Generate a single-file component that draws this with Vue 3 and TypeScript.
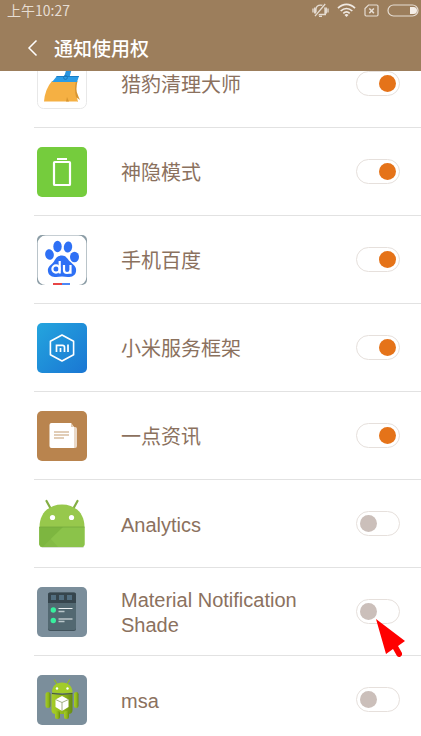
<script setup lang="ts">
import { ref } from 'vue'

interface AppEntry {
  id: string
  name: string
  enabled: boolean
}

const apps = ref<AppEntry[]>([
  { id: 'cleaner', name: '猎豹清理大师', enabled: true },
  { id: 'battery', name: '神隐模式', enabled: true },
  { id: 'baidu', name: '手机百度', enabled: true },
  { id: 'mi', name: '小米服务框架', enabled: true },
  { id: 'news', name: '一点资讯', enabled: true },
  { id: 'analytics', name: 'Analytics', enabled: false },
  { id: 'shade', name: 'Material Notification Shade', enabled: false },
  { id: 'msa', name: 'msa', enabled: false },
])
</script>

<template>
  <div class="screen">
    <header class="header">
      <div class="status">
        <span>上午10:27</span>
        <div class="status-icons">
          <svg width="17" height="15" viewBox="0 0 17 15" fill="none" stroke="#e6ddd3" stroke-width="1.3">
            <path d="M4 11.2V6.2C4 3.6 5.8 2.1 8.5 2.1S13 3.6 13 6.2v5M3 11.5h11M7 13.3h3M1 5.500v4M16 5.500v4M2.700 4.500v6M14.300 4.500v6" />
            <path d="M13.500 1L3.300 13.200" stroke="#9c7e5c" stroke-width="3" />
            <path d="M13.200 1L3 13.200" />
          </svg>
          <svg width="19" height="14" viewBox="0 0 19 14" fill="none" stroke="#f0e9e2" stroke-width="1.7">
            <path d="M1 5.200C6 .2 13 .2 18 5.200M3.700 8c3.500-3.300 8.100-3.300 11.600 0M6.300 10.400c2-1.800 4.400-1.800 6.400 0" />
            <path d="M7.500 12a2.800 2.800 0 0 1 4 0l-2 2z" fill="#f0e9e2" stroke="none" />
          </svg>
          <svg width="15" height="13" viewBox="0 0 15 13" fill="none" stroke="#e6ddd3" stroke-width="1.2">
            <path d="M4.500 1h8.300a1.200 1.200 0 0 1 1.200 1.200v8.600a1.200 1.200 0 0 1-1.200 1.200H2.200A1.200 1.200 0 0 1 1 10.800V4.500z" />
            <path d="M5.300 4.500l4.600 4.600M9.900 4.500L5.300 9.100" stroke-width="1.500" />
          </svg>
          <svg width="32" height="13" viewBox="0 0 32 13">
            <rect x="1" y="1" width="30" height="11" rx="5.500" fill="none" stroke="#e6ddd3" stroke-width="1.200" />
            <path d="M23 3h3.500a3.500 3.500 0 0 1 0 7H23z" fill="#f4eee8" />
          </svg>
        </div>
      </div>
      <div class="title-bar">
        <button class="back" type="button" aria-label="返回">
          <svg width="12" height="18" viewBox="0 0 12 18" fill="none" stroke="#fff" stroke-width="1.500">
            <path d="M9.500 1.500L2 9l7.500 7.500" />
          </svg>
        </button>
        <h1>通知使用权</h1>
      </div>
    </header>

    <main class="viewport">
      <ul class="list">
        <li v-for="app in apps" :key="app.id">
          <label class="row">
            <svg class="icon" viewBox="0 0 50 50" aria-hidden="true">
              <g v-if="app.id === 'cleaner'">
                <rect x=".5" y=".5" width="49" height="49" rx="6" fill="#fff" stroke="#e8e8e8" />
                <path d="M15 22Q8 30 7 42.500h33l1 .5-2-9 0-12z" fill="#f5b043" />
                <path d="M39 22h1.500q-2 9 0 13 1 3 2.500 6l-4-3q-2-8 0-16M30 38l2 4.500h-3z" fill="#d79531" />
                <path d="M32 2l5 0-4.500 16H27z" fill="#2794df" />
                <path d="M20 17h22l-2 6H15z" fill="#2b9ce6" />
                <path d="M20 17h22l-.5 1H19z" fill="#167dc8" />
                <circle cx="28.500" cy="18.500" r="1.900" fill="none" stroke="#1676ba" />
              </g>
              <g v-else-if="app.id === 'battery'">
                <rect width="50" height="50" rx="5" fill="#75cc3d" />
                <path d="M20 11h10v2H20z" fill="#fff" />
                <rect x="17" y="15" width="16" height="23" rx=".8" fill="none" stroke="#fff" stroke-width="2.200" />
              </g>
              <g v-else-if="app.id === 'baidu'">
                <rect width="50" height="50" rx="5" fill="#8c9da6" />
                <rect x=".6" y=".6" width="48.800" height="49.400" rx="8" fill="#fff" />
                <g fill="#2e70f5">
                  <ellipse cx="20.500" cy="11.500" rx="4.200" ry="5.700" />
                  <ellipse cx="31" cy="12" rx="4.200" ry="5.500" transform="rotate(8 31 12)" />
                  <ellipse cx="12.500" cy="19.500" rx="4.300" ry="5.300" transform="rotate(-12 12.500 19.500)" />
                  <ellipse cx="37.500" cy="22" rx="4.500" ry="5.200" />
                  <path d="M25 20.500c4 0 5 3 8 6 3 3 7 5 6 10-1 6-7 6-14 5-7 1-13 1-14-5-1-5 4-7 6-10 2-4 4-6 8-6" />
                </g>
                <g fill="none" stroke="#fff" stroke-width="2.200">
                  <circle cx="19" cy="34" r="3.600" />
                  <path d="M22.700 26v12.500M27 30v5q0 3 3 3 3.500 0 3.500-3V30M33.500 34v4.800" />
                </g>
                <path d="M16 48h9v2h-9z" fill="#e74545" />
                <path d="M25 48h8v2h-8z" fill="#4c87f5" />
              </g>
              <g v-else-if="app.id === 'mi'">
                <defs>
                  <linearGradient id="mi-blue" x1="0" y1="0" x2="1" y2="1">
                    <stop offset="0" stop-color="#24a5de" />
                    <stop offset="1" stop-color="#1a76d3" />
                  </linearGradient>
                </defs>
                <rect width="50" height="50" rx="5" fill="url(#mi-blue)" />
                <path d="M25 12l11.600 6.300v13.400L25 38l-11.600-6.300V18.300z" fill="none" stroke="#fff" stroke-width="1.600" stroke-linejoin="round" />
                <path d="M19.500 29v-6.700h6q2 0 2 2V29M23.500 25v4M31 21.500V29" fill="none" stroke="#fff" stroke-width="1.700" />
              </g>
              <g v-else-if="app.id === 'news'">
                <rect width="50" height="50" rx="5" fill="#b9844e" />
                <path d="M36 16h2q2 0 2 2v17q0 2-2 2h-5z" fill="#ead9c8" />
                <path d="M14.500 12H34l3 4v21H14.500q-2 0-2-2V14q0-2 2-2" fill="#fff" />
                <path d="M34 12l3 4h-3z" fill="#e3cbb2" />
                <path d="M17 21h15M17 24h15M17 27h10" stroke="#c39b70" stroke-width="1.200" />
              </g>
              <g v-else-if="app.id === 'analytics'">
                <path d="M3.500 47.500h43v1H5z" fill="#b9c3af" />
                <path d="M9.500 2L15 12M40.500 2L35 12" stroke="#83ae43" stroke-width="2.200" stroke-linecap="round" />
                <path d="M2.500 28C2.500 14 12 5.500 25 5.500S47.500 14 47.500 28v17q0 3-3 3h-39q-3 0-3-3z" fill="#97c84c" />
                <path d="M2.500 28h45v17q0 3-3 3h-39q-3 0-3-3z" fill="#8bc34a" />
                <path d="M3 28l18 20H5.500q-3 0-3-3V28z" fill="#84bb46" />
                <path d="M2.500 28H26L6 47.500q-3.500 0-3.500-3z" fill="#7db640" />
                <path d="M2.500 28h45" stroke="#74a83c" stroke-width=".8" />
                <circle cx="15.500" cy="18.500" r="2.600" fill="#fff" />
                <circle cx="34.500" cy="18.500" r="2.600" fill="#fff" />
              </g>
              <g v-else-if="app.id === 'shade'">
                <rect width="50" height="50" rx="5" fill="#7b8e9b" />
                <rect x="11" y="6" width="28" height="38" rx="2" fill="#40515a" />
                <rect x="11" y="5.500" width="28" height="37.500" rx="2" fill="#526871" />
                <path d="M13 5.500h24q2 0 2 2V16H11V7.500q0-2 2-2" fill="#36454d" />
                <path d="M14 8h5v5h-5zM22 8h5v5h-5zM30 8h5v5h-5z" fill="#526e80" />
                <circle cx="16.300" cy="23" r="2.700" fill="#38ef9e" />
                <circle cx="16.300" cy="33.500" r="2.700" fill="#38ef9e" />
                <path d="M21.500 21.500h14M21.500 32h14" stroke="#eef2f3" stroke-width="1.200" />
                <path d="M21.500 24.500h6M21.500 34.500h6" stroke="#b9c5c9" stroke-width="1.300" />
              </g>
              <g v-else>
                <defs>
                  <linearGradient id="robot-green" x1="0" y1="0" x2="1" y2="0">
                    <stop offset="0" stop-color="#a7ce29" />
                    <stop offset=".6" stop-color="#8eb51a" />
                    <stop offset="1" stop-color="#678b12" />
                  </linearGradient>
                </defs>
                <rect width="50" height="50" rx="5" fill="#7b8e9b" />
                <path d="M20 9l-2.500-4M30 9l2.500-4" stroke="#91b72a" stroke-width="1.300" stroke-linecap="round" />
                <path d="M15 17.500C15 11 19 7.500 25 7.500s10.500 3.500 10.500 10q-10 1.500-20.500 0" fill="#a2cc29" />
                <g fill="url(#robot-green)">
                  <path d="M14.500 19q11 1.500 21 0v16q0 4-4 4h-13q-4 0-4-4z" />
                  <rect x="8.500" y="17" width="5" height="16" rx="2.500" />
                  <rect x="37" y="17" width="4.500" height="16" rx="2.200" />
                  <rect x="18" y="36" width="5" height="8" rx="2" />
                  <rect x="27" y="36" width="5" height="8" rx="2" />
                </g>
                <path d="M15 18.500q10 1.500 20.500 0" fill="none" stroke="#3f5917" stroke-width=".9" />
                <circle cx="20" cy="13.500" r="1.200" fill="#fff" />
                <circle cx="30.500" cy="13.500" r="1.200" fill="#fff" />
                <path d="M25 21l6.500 3.500v7.500L25 36l-6.500-4v-7.500z" fill="#fff" />
                <path d="M18.500 24.500L25 27.500l6.500-3M25 27.500V36" fill="none" stroke="#8a9b66" stroke-width=".8" />
              </g>
            </svg>
            <span class="name">{{ app.name }}</span>
            <input v-model="app.enabled" class="switch" type="checkbox" />
          </label>
        </li>
      </ul>
    </main>

    <svg class="pointer" width="29" height="39" viewBox="0 0 29 39" aria-hidden="true">
      <path d="M0 0l29 22-7 5 4 7a3 3 0 0 1-5 3l-4-7-7 5z" fill="#f00" />
    </svg>
  </div>
</template>

<style>
body {
  margin: 0;
  background: #fff;
}
</style>

<style scoped>
.screen {
  position: relative;
  display: flex;
  flex-direction: column;
  height: 100vh;
  overflow: hidden;
  background: #fff;
  font-family: "Liberation Sans", "Noto Sans CJK SC", sans-serif;
}

.header {
  flex: none;
  background: #9c7e5c;
  color: #fff;
}

.status {
  display: flex;
  align-items: center;
  justify-content: space-between;
  height: 20px;
  padding: 0 2px 2px 7px;
  color: #e6ddd3;
  font: 14px/20px "Noto Sans CJK SC", sans-serif;
}

.status-icons {
  display: flex;
  align-items: center;
  gap: 8px;
}

.title-bar {
  display: flex;
  align-items: center;
  gap: 15px;
  height: 47px;
  padding: 2px 27px 0;
}

.back {
  display: flex;
  padding: 0;
  border: 0;
  background: none;
}

h1 {
  margin: 0;
  font: 500 19px/28px "Noto Sans CJK SC", sans-serif;
}

.viewport {
  flex: 1;
  min-height: 0;
  overflow: hidden;
}

/* The list is scrolled part of a row under the header. */
.list {
  margin: -31px 0 0;
  padding: 0;
  list-style: none;
}

.row {
  display: flex;
  align-items: center;
  min-height: 52px;
  margin-left: 34px;
  padding: 18px 21px 17px 3px;
  border-bottom: 1px solid #e2e2e2;
}

.icon {
  flex: none;
  width: 50px;
  height: 50px;
}

.name {
  flex: 1;
  margin: 0 40px 0 34px;
  padding-top: 2px;
  color: #8b715e;
  font-size: 20px;
  line-height: 25px;
}

.switch {
  flex: none;
  width: 44px;
  height: 25px;
  margin: 0 0 1px;
  padding: 3px;
  box-sizing: border-box;
  appearance: none;
  border: 1px solid #e6e0dc;
  border-radius: 13px;
  background: #fff;
}

.switch::before {
  content: "";
  display: block;
  width: 17px;
  height: 17px;
  border-radius: 50%;
  background: #cbbfba;
}

.switch:checked::before {
  margin-left: auto;
  background: #e57319;
}

.pointer {
  position: absolute;
  top: 619px;
  right: 16px;
}
</style>
